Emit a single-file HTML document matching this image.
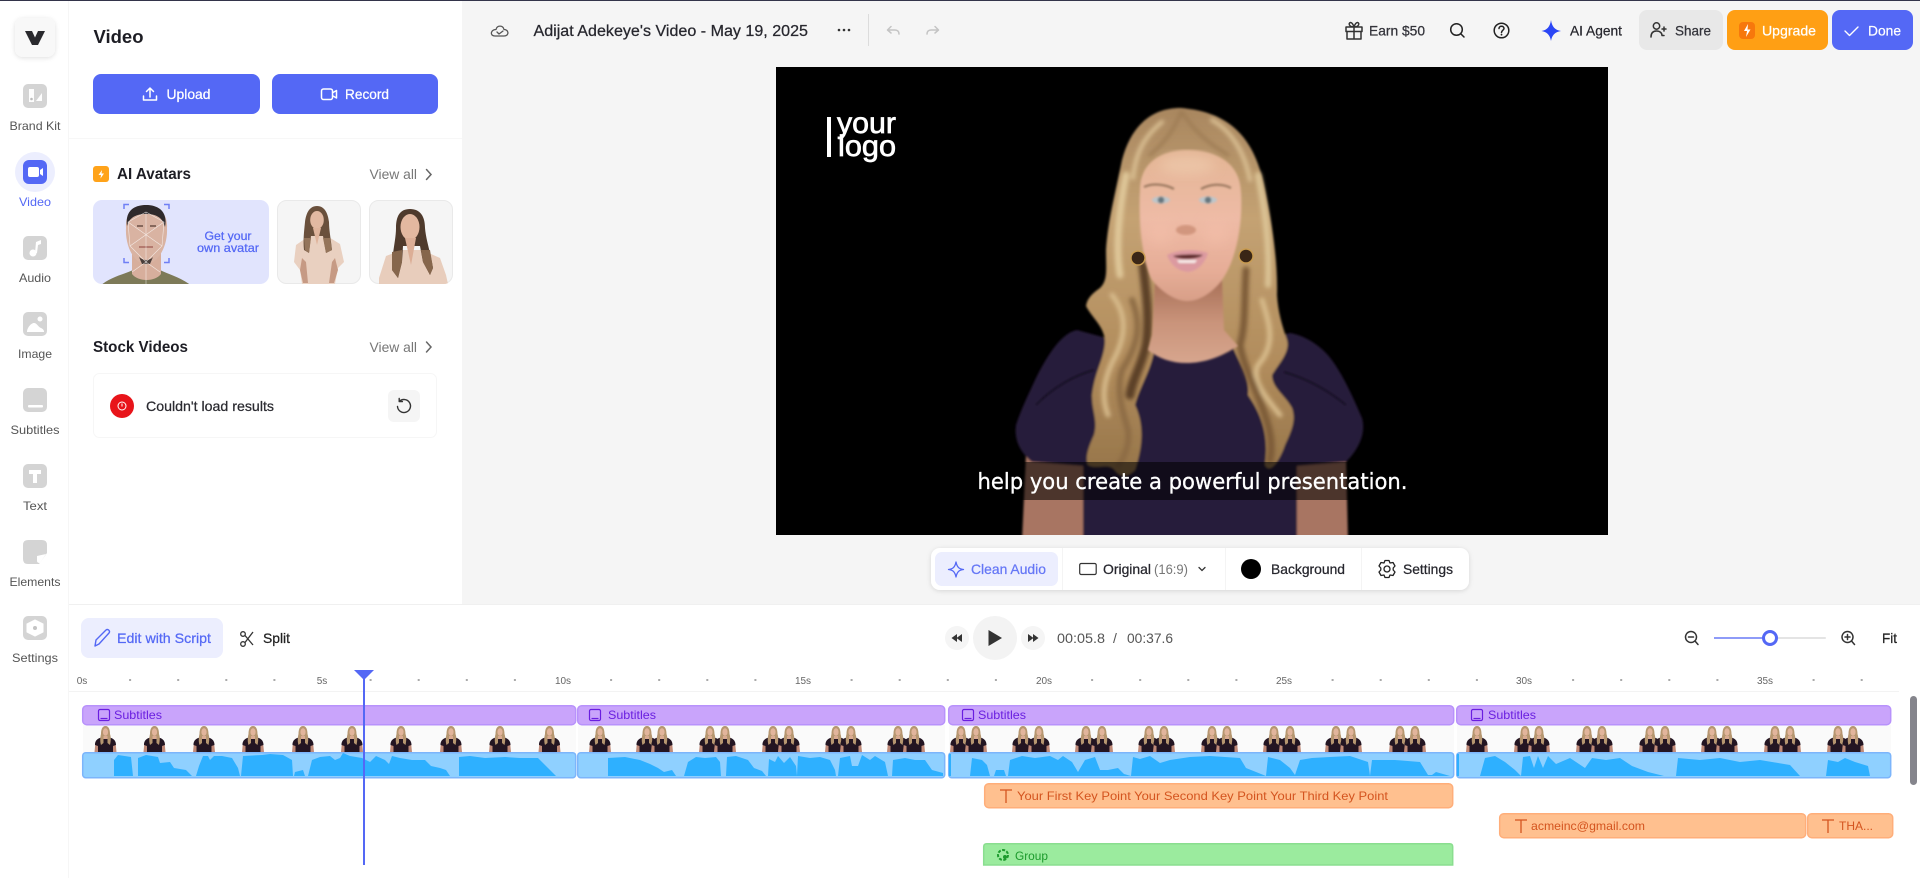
<!DOCTYPE html>
<html lang="en"><head><meta charset="utf-8"><title>Video editor</title>
<style>
html,body{margin:0;padding:0;background:#fff;width:1920px;height:878px;overflow:hidden}
svg{display:block;position:absolute;left:0;top:0}
text{font-family:"Liberation Sans",sans-serif;white-space:pre}
.m{fill:currentColor;stroke:currentColor;stroke-width:.25}
.s{fill:none;stroke:currentColor;stroke-width:1.5;stroke-linecap:round;stroke-linejoin:round}
.r{font-size:12px;fill:#555;text-anchor:middle}
.k{font-size:10px;fill:#666;text-anchor:middle}
.sub{font-size:12px;fill:#6a1ee0}
.o{font-size:12px;fill:#d4541f}
</style></head><body>
<svg width="1920" height="878" viewBox="0 0 1920 878" xmlns="http://www.w3.org/2000/svg">
<defs>
<filter id="sh" x="-20%" y="-30%" width="140%" height="170%"><feDropShadow dx="0" dy="1" stdDeviation="2.5" flood-color="#000" flood-opacity=".13"/></filter>
<filter id="b1" x="-10%" y="-10%" width="120%" height="120%"><feGaussianBlur stdDeviation="1"/></filter>
<filter id="b2" x="-20%" y="-20%" width="140%" height="140%"><feGaussianBlur stdDeviation="2"/></filter>
<filter id="b4" x="-30%" y="-30%" width="160%" height="160%"><feGaussianBlur stdDeviation="6"/></filter>
<linearGradient id="face" x1="0" y1="0" x2="0" y2="1"><stop offset="0" stop-color="#e3b594"/><stop offset=".45" stop-color="#eebba6"/><stop offset=".8" stop-color="#e6ad97"/><stop offset="1" stop-color="#d89f88"/></linearGradient>
<linearGradient id="neck" x1="0" y1="0" x2="0" y2="1"><stop offset="0" stop-color="#a87058"/><stop offset=".5" stop-color="#c9937a"/><stop offset="1" stop-color="#d7a68e"/></linearGradient>
<linearGradient id="hair" x1="0" y1="0" x2="0" y2="1"><stop offset="0" stop-color="#a98760"/><stop offset=".3" stop-color="#c4a273"/><stop offset=".7" stop-color="#b18c5c"/><stop offset="1" stop-color="#96754a"/></linearGradient>
<clipPath id="vid"><rect x="776" y="67" width="832" height="468"/></clipPath>
<clipPath id="c1"><rect x="93" y="200" width="176" height="84" rx="9"/></clipPath>
<clipPath id="c2"><rect x="277" y="200" width="84" height="84" rx="9"/></clipPath>
<clipPath id="c3"><rect x="369" y="200" width="84" height="84" rx="9"/></clipPath>
<g id="w">
<path d="M-11 27L-10 17L10 17L11 27Z" fill="#c08a78"/>
<path d="M-10.500 20C-10.500 14-6 13-3 12L3 12C6 13 10.500 14 10.500 20L7.500 21L7.500 27L-7.500 27L-7.500 21Z" fill="#231522"/>
<path d="M0 1C-3.500 1-4.500 5-4.500 9C-5.500 13-5.500 17-4.500 20L-2 18L-2 12L2 12L2 18L4.500 20C5.500 15 5.500 12 4.500 9C4.500 5 3.500 1 0 1Z" fill="#b69670"/>
<ellipse cx="0" cy="7" rx="2.600" ry="3.700" fill="#e2b59c"/>
<path d="M-2 11H2V14H-2Z" fill="#d9aa92"/>
</g>
</defs>

<!-- frame -->
<rect x="0" y="0" width="1920" height="878" fill="#fff"/>
<rect x="462" y="1" width="1458" height="603" fill="#f5f5f5"/>
<rect x="0" y="0" width="1920" height="1" fill="#33344a"/>
<rect x="68" y="1" width="1" height="877" fill="#f6f6f6"/>
<rect x="69" y="604" width="1851" height="1" fill="#f0f0f0"/>
<rect x="69" y="138" width="393" height="1" fill="#f7f7f7"/>

<!-- rail -->
<rect x="15" y="18" width="40" height="39" rx="8" fill="#f8f8f8" filter="url(#sh)"/>
<path d="M25 31L32 31L35 37.500L38 31L45 31L38 45L32 45Z" fill="#2a2a2e"/>

<rect x="23" y="84" width="24" height="24" rx="5" fill="#d4d4d4"/>
<path d="M29 89H34V102H29Z M36 101L42 93V101Z" fill="#fff" opacity=".95"/>
<circle cx="31.500" cy="99" r="1.300" fill="#bbb"/>
<text class="r" x="35" y="130" textLength="51" lengthAdjust="spacingAndGlyphs">Brand Kit</text>

<circle cx="35" cy="172" r="20" fill="#eceefe"/>
<rect x="23" y="160" width="24" height="24" rx="6" fill="#5468f5"/>
<rect x="28" y="167" width="11" height="10" rx="2" fill="#fff"/><path d="M40 170L43 168V176L40 174Z" fill="#fff"/>
<text class="r" x="35" y="206" textLength="32" lengthAdjust="spacingAndGlyphs" style="fill:#5468f5">Video</text>

<rect x="23" y="236" width="24" height="24" rx="5" fill="#d4d4d4"/>
<circle cx="33" cy="253" r="3.500" fill="#fff"/><path d="M35 253L36 242L41 240V244L38 245L37 253Z" fill="#fff"/>
<text class="r" x="35" y="282" textLength="32" lengthAdjust="spacingAndGlyphs">Audio</text>

<rect x="23" y="312" width="24" height="24" rx="5" fill="#d4d4d4"/>
<circle cx="40" cy="319" r="2.500" fill="#fff"/><path d="M27 332C27 328 31 323 34 323C37 323 38 327 41 328C43 329 44 330 44 332Z" fill="#fff"/>
<text class="r" x="35" y="358" textLength="34" lengthAdjust="spacingAndGlyphs">Image</text>

<rect x="23" y="388" width="24" height="24" rx="5" fill="#d4d4d4"/>
<rect x="28" y="405" width="15" height="2.500" rx="1" fill="#fff"/>
<text class="r" x="35" y="434" textLength="49" lengthAdjust="spacingAndGlyphs">Subtitles</text>

<rect x="23" y="464" width="24" height="24" rx="5" fill="#d4d4d4"/>
<path d="M29 470H41V474H37V483H33V474H29Z" fill="#fff"/>
<text class="r" x="35" y="510" textLength="24" lengthAdjust="spacingAndGlyphs">Text</text>

<path d="M28 540H42Q47 540 47 545V553L39 564H28Q23 564 23 559V545Q23 540 28 540Z" fill="#d4d4d4"/>
<path d="M37 556L46 554L40 563Q37 563 37 561Z" fill="#fff"/>
<text class="r" x="35" y="586" textLength="51" lengthAdjust="spacingAndGlyphs">Elements</text>

<rect x="23" y="616" width="24" height="24" rx="5" fill="#d4d4d4"/>
<path d="M35 620L43 624V632L35 636L27 632V624Z" fill="#fff" stroke="#fff" stroke-width="1" stroke-linejoin="round"/><circle cx="35" cy="628" r="2" fill="#c4c4c4"/>
<text class="r" x="35" y="662" textLength="46" lengthAdjust="spacingAndGlyphs">Settings</text>

<!-- left panel -->
<text x="93.500" y="43" font-size="18" font-weight="700" fill="#1d1d24" textLength="50" lengthAdjust="spacingAndGlyphs">Video</text>
<rect x="93" y="74" width="167" height="40" rx="8" fill="#5468f5"/>
<rect x="272" y="74" width="166" height="40" rx="8" fill="#5468f5"/>
<g style="color:#fff" class="s"><path d="M150 97V89M146.500 91.500L150 88L153.500 91.500M143.500 96V100H156.500V96"/></g>
<text x="166.500" y="99" font-size="14" class="m" style="color:#fff" textLength="44" lengthAdjust="spacingAndGlyphs">Upload</text>
<g style="color:#fff" class="s"><rect x="321.500" y="89" width="11" height="10.500" rx="2"/><path d="M333 92.500L336.500 90.500V98L333 96"/></g>
<text x="345" y="99" font-size="14" class="m" style="color:#fff" textLength="44" lengthAdjust="spacingAndGlyphs">Record</text>

<rect x="93" y="166" width="16" height="16" rx="3" fill="#ffa31a"/>
<path d="M102 170L98.500 175H101L100.500 178.500L104 173.500H101.500Z" fill="#fff"/>
<text x="117" y="179" font-size="16" font-weight="700" fill="#1d1d24" textLength="74" lengthAdjust="spacingAndGlyphs">AI Avatars</text>
<text x="369.500" y="179" font-size="14" fill="#777" textLength="47.500" lengthAdjust="spacingAndGlyphs">View all</text>
<path d="M426.500 169.500L431 174.500L426.500 179.500" fill="none" stroke="#666" stroke-width="1.500" stroke-linecap="round"/>

<!-- own avatar card -->
<rect x="93" y="200" width="176" height="84" rx="9" fill="#e1e4fd"/>
<g clip-path="url(#c1)">
<path d="M100 286C110 277 125 274 133 270L160 270C168 274 180 277 192 286Z" fill="#7d7a58"/>
<path d="M132 252H161V274C155 282 138 282 132 274Z" fill="#d7ae9c"/>
<path d="M126 228C125 214 133 205 146 205C159 205 168 214 167 228C168 246 158 264 146 264C134 264 125 246 126 228Z" fill="#d9b3a2"/>
<path d="M127 226C125 212 133 205 146 205C159 205 168 212 165 227C163 219 158 214 146 214C134 214 129 219 127 226Z" fill="#2f2a2c"/>
<path d="M137 226H143M150 226H156" stroke="#6b4f45" stroke-width="1.500"/>
<path d="M139 247H153" stroke="#a8685e" stroke-width="1.500"/>
<path d="M139 257C144 261 149 261 153 257L150 264H142Z" fill="#4a3d3a"/>
<path d="M128 222L146 212L164 222L162 246L146 262L130 246ZM146 212V262M128 222L162 246M164 222L130 246M132 272L146 262L160 272M146 262V284" fill="none" stroke="#fff" stroke-width=".6" opacity=".7"/>
<path d="M124 209V204.500H129M164 204.500H169V209M124 258V262.500H129M164 262.500H169V258" fill="none" stroke="#6f7ff5" stroke-width="1.500"/>
</g>
<text x="204.500" y="240" font-size="12" class="m" style="color:#5468f5" textLength="47" lengthAdjust="spacingAndGlyphs">Get your</text>
<text x="197" y="252" font-size="12" class="m" style="color:#5468f5" textLength="62" lengthAdjust="spacingAndGlyphs">own avatar</text>

<!-- woman cards -->
<rect x="277.500" y="200.500" width="83" height="83" rx="9" fill="#f5f5f5" stroke="#e9e9e9"/>
<g clip-path="url(#c2)">
<path d="M309 236L296 245L294 262L300 270L302 284H335L338 268L344 262L340 244L327 236Z" fill="#e9d0c0"/>
<path d="M302 258L300 270L303 283H308L306 262ZM335 258L338 270L334 283H329L332 262Z" fill="#c69a84"/>
<path d="M317 206C309 206 306 214 305 222C304 232 303 240 304 250L309 253L311 236H323L326 253L332 250C331 240 329 230 329 222C328 214 325 206 317 206Z" fill="#6a503c"/>
<path d="M304 238L305 250L309 253L311 238ZM323 238L326 253L332 250L330 238Z" fill="#94745a"/>
<ellipse cx="317" cy="220" rx="6.800" ry="9" fill="#e2b9a2"/>
<path d="M313 228H321L317 245Z" fill="#dfb49c"/>
</g>
<rect x="369.500" y="200.500" width="83" height="83" rx="9" fill="#f5f5f5" stroke="#e9e9e9"/>
<g clip-path="url(#c3)">
<path d="M402 250L386 256L379 278V284H448L446 275L440 258L422 250Z" fill="#e8cdbc"/>
<path d="M410 209C400 209 396 216 396 228C396 240 392 252 392 270L398 278L402 262L403 246H420L423 262L430 275L433 268C430 250 426 240 425 228C425 216 420 209 410 209Z" fill="#4f3a2c"/>
<path d="M392 252V270L398 278L402 262L402 250ZM421 250L423 262L430 275L433 268L430 250Z" fill="#86664c"/>
<ellipse cx="410" cy="227" rx="9.500" ry="13" fill="#e3b8a0"/>
<path d="M405 238H416L411 265Z" fill="#dcae96"/>
</g>

<!-- stock videos -->
<text x="93" y="352" font-size="16" font-weight="700" fill="#1d1d24" textLength="95" lengthAdjust="spacingAndGlyphs">Stock Videos</text>
<text x="369.500" y="352" font-size="14" fill="#777" textLength="47.500" lengthAdjust="spacingAndGlyphs">View all</text>
<path d="M426.500 342L431 347L426.500 352" fill="none" stroke="#666" stroke-width="1.500" stroke-linecap="round"/>
<rect x="93.500" y="373.500" width="343" height="64" rx="6" fill="#fff" stroke="#f6f6f6"/>
<circle cx="122" cy="406" r="12" fill="#e8141a"/>
<circle cx="122" cy="406" r="4" fill="none" stroke="#fff" stroke-width="1"/><path d="M122 403.500V406.500" stroke="#fff" stroke-width="1"/>
<text x="146" y="411" font-size="14" class="m" style="color:#2a2a30" textLength="128" lengthAdjust="spacingAndGlyphs">Couldn't load results</text>
<rect x="388" y="390" width="32" height="32" rx="6" fill="#f5f5f5"/>
<path d="M399.400 401.400A6.500 6.500 0 1 1 397.500 406.500M399.200 398.500V401.600H402.400" fill="none" stroke="#333" stroke-width="1.400" stroke-linecap="round" stroke-linejoin="round"/>

<!-- topbar -->
<g style="color:#555" class="s"><path d="M495 36H504C509.500 36 509 29.500 504 29.500C503 25 497 25 496 29.500C490.500 29.500 489.500 36 495 36Z M497 32L499 34L503 31" stroke-width="1.300"/></g>
<text x="533.500" y="36" font-size="15.500" class="m" style="color:#27272e" textLength="274.500" lengthAdjust="spacingAndGlyphs">Adijat Adekeye's Video - May 19, 2025</text>
<circle cx="839" cy="30" r="1.300" fill="#333"/><circle cx="844" cy="30" r="1.300" fill="#333"/><circle cx="849" cy="30" r="1.300" fill="#333"/>
<rect x="868" y="14" width="1" height="32" fill="#dcdcdc"/>
<path d="M891 26.500L887.500 30L891 33M888 30H895C897.500 30 899 31.500 899 34" fill="none" stroke="#c4c4c4" stroke-width="1.500" stroke-linecap="round" stroke-linejoin="round"/>
<path d="M935 26.500L938.500 30L935 33M938 30H931C928.500 30 927 31.500 927 34" fill="none" stroke="#c4c4c4" stroke-width="1.500" stroke-linecap="round" stroke-linejoin="round"/>

<g style="color:#333" class="s"><rect x="1346" y="27" width="16" height="4.500"/><path d="M1347 31.500V39H1361V31.500M1354 27V39M1354 27C1349 27 1348 23 1350.500 22.500C1352.500 22.500 1354 27 1354 27C1354 27 1355.500 22.500 1357.500 22.500C1360 23 1359 27 1354 27"/></g>
<text x="1369" y="35.500" font-size="14" class="m" style="color:#33333a" textLength="56" lengthAdjust="spacingAndGlyphs">Earn $50</text>
<g style="color:#222" class="s"><circle cx="1456.500" cy="29.500" r="5.800"/><path d="M1461 34L1464 37"/></g>
<g style="color:#222" class="s"><circle cx="1501.500" cy="30.500" r="7.300"/><path d="M1499 28.500C1499 25.500 1504 25.500 1504 28.500C1504 30 1501.500 30.500 1501.500 32.500"/></g>
<circle cx="1501.500" cy="34.700" r=".9" fill="#222"/>
<path d="M1551 20C1552 27 1555 30 1561 31C1555 32 1552 35 1551 41C1550 35 1547 32 1541.500 31C1547 30 1550 27 1551 20Z" fill="#2b46f5"/>
<text x="1570" y="35.500" font-size="14" class="m" style="color:#27272e" textLength="52" lengthAdjust="spacingAndGlyphs">AI Agent</text>
<rect x="1639" y="10" width="84" height="40" rx="8" fill="#e8e8e8"/>
<g style="color:#333" class="s"><circle cx="1656.500" cy="26" r="3.200"/><path d="M1651 37C1651 33 1653 31 1656.500 31C1660 31 1662 33 1662 35.500H1664M1664 27V31M1662 29H1666"/></g>
<text x="1675" y="35.500" font-size="14" class="m" style="color:#33333a" textLength="36" lengthAdjust="spacingAndGlyphs">Share</text>
<rect x="1727" y="10" width="101" height="40" rx="8" fill="#ff9f14"/>
<rect x="1739" y="22" width="16" height="17" rx="4" fill="#f7780c"/>
<path d="M1748 24L1744 31H1747L1746 37L1750.500 29.500H1747.500Z" fill="#fff"/>
<text x="1762" y="35.500" font-size="14" class="m" style="color:#fff" textLength="54" lengthAdjust="spacingAndGlyphs">Upgrade</text>
<rect x="1832" y="10" width="81" height="40" rx="8" fill="#5468f5"/>
<path d="M1845 31L1849.500 35.500L1858 27" fill="none" stroke="#fff" stroke-width="1.400" stroke-linecap="round" stroke-linejoin="round"/>
<text x="1868" y="35.500" font-size="14" class="m" style="color:#fff" textLength="33" lengthAdjust="spacingAndGlyphs">Done</text>

<!-- video -->
<rect x="776" y="67" width="832" height="468" fill="#000"/>
<g clip-path="url(#vid)">
<rect x="827" y="117" width="4" height="40" fill="#fff"/>
<text x="837" y="133" font-size="30" fill="#fff" stroke="#fff" stroke-width=".7" textLength="59" lengthAdjust="spacingAndGlyphs">your</text>
<text x="838" y="156" font-size="30" fill="#fff" stroke="#fff" stroke-width=".7" textLength="58" lengthAdjust="spacingAndGlyphs">logo</text>

<g filter="url(#b1)">
<path d="M1026 455L1022 540H1086V455Z" fill="#a87462"/>
<path d="M1297 455V540H1348L1346 455Z" fill="#a87462"/>
<path d="M1077 330C1060 333 1045 360 1036 378C1028 395 1020 412 1016 425C1014 440 1020 452 1032 462L1083 466L1083 540L1297 540L1297 466L1346 462C1360 448 1366 432 1362 418C1350 390 1338 365 1325 352C1315 342 1302 335 1290 333L1237 345C1215 362 1170 365 1150 350Z" fill="#281a3b"/>
<path d="M1036 405C1052 388 1075 375 1094 370M1346 405C1325 388 1305 378 1284 372" stroke="#170d24" stroke-width="2" fill="none"/>
<path d="M1180 108C1155 108 1132 122 1122 160C1115 195 1108 220 1106 250C1106 270 1108 280 1100 288C1093 293 1087 298 1086 306C1092 318 1103 325 1105 340C1105 358 1095 370 1092 395C1092 412 1098 420 1094 435C1088 448 1085 458 1088 465C1097 470 1108 462 1115 470C1122 480 1130 475 1135 470C1145 440 1142 420 1135 405C1140 385 1152 370 1155 345L1232 345C1240 365 1250 375 1248 395C1258 410 1270 430 1265 465C1270 475 1280 460 1285 445C1292 430 1296 420 1292 408C1285 395 1272 388 1272 375C1280 362 1290 352 1287 340C1282 325 1278 312 1277 295C1278 262 1272 225 1266 195C1258 150 1240 112 1180 108Z" fill="url(#hair)"/>
</g>
<g fill="none" filter="url(#b2)" stroke-linecap="round">
<path d="M1126 175C1120 205 1115 245 1120 275" stroke="#dfc799" stroke-width="7"/>
<path d="M1112 295C1124 310 1128 330 1116 355C1105 375 1100 395 1108 415" stroke="#d8bc8c" stroke-width="5"/>
<path d="M1132 300C1142 325 1138 345 1122 370C1116 390 1122 410 1128 430C1130 445 1124 458 1118 466" stroke="#8d6c45" stroke-width="6"/>
<path d="M1143 265C1146 290 1150 320 1146 345C1142 365 1132 380 1130 395" stroke="#5c4026" stroke-width="9"/>
<path d="M1258 175C1264 205 1270 240 1268 285" stroke="#dcc496" stroke-width="6"/>
<path d="M1262 300C1270 325 1276 345 1258 365C1250 380 1268 400 1280 415" stroke="#d9bd8d" stroke-width="5"/>
<path d="M1246 270C1244 300 1246 325 1240 345C1244 370 1260 395 1268 425C1272 440 1272 450 1270 460" stroke="#7d5c38" stroke-width="7"/>
<path d="M1162 122C1146 135 1136 150 1133 178M1212 120C1230 130 1244 150 1250 180" stroke="#dbc194" stroke-width="4"/>
<path d="M1181 112C1176 125 1168 140 1150 155M1182 112C1190 125 1205 142 1228 155" stroke="#9c7a52" stroke-width="3"/>
</g>
<g filter="url(#b1)">
<path d="M1155 280L1152 335L1148 350C1170 368 1205 368 1238 346L1224 330L1222 280Z" fill="url(#neck)"/>
<path d="M1140 190C1140 160 1165 150 1187 150C1212 150 1240 160 1241 192C1243 225 1236 260 1222 280C1210 295 1198 301 1187 301C1176 301 1163 293 1152 280C1143 262 1138 225 1140 190Z" fill="url(#face)"/>
</g>
<ellipse cx="1160" cy="232" rx="14" ry="13" fill="#f2bda8" opacity=".7" filter="url(#b4)"/>
<ellipse cx="1216" cy="232" rx="14" ry="13" fill="#f2bda8" opacity=".7" filter="url(#b4)"/>
<ellipse cx="1187" cy="165" rx="28" ry="10" fill="#f0cdb0" opacity=".6" filter="url(#b4)"/>
<ellipse cx="1186" cy="230" rx="10" ry="5" fill="#c98b72" opacity=".75" filter="url(#b1)"/>
<g filter="url(#b1)">
<path d="M1144 187C1152 183 1165 184 1174 189" stroke="#94735a" stroke-width="2" fill="none"/>
<path d="M1201 189C1210 184 1222 183 1231 188" stroke="#94735a" stroke-width="2" fill="none"/>
<ellipse cx="1161" cy="200" rx="9" ry="3.500" fill="#bcc6cb"/><ellipse cx="1208" cy="200" rx="9" ry="3.500" fill="#bcc6cb"/>
<circle cx="1161" cy="200" r="3.300" fill="#66767e"/><circle cx="1208" cy="200" r="3.300" fill="#66767e"/>
<path d="M1167 255C1178 249 1197 249 1208 253C1205 263 1198 271 1188 272C1176 271 1170 263 1167 255Z" fill="#dc9aa0"/>
<path d="M1173 256C1180 254 1198 254 1203 255C1198 260 1178 260 1173 256Z" fill="#5e2c2c"/>
<path d="M1177 260H1197L1195 263H1179Z" fill="#f6ebe8"/>
</g>
<circle cx="1138" cy="258" r="7" fill="#3a2616" stroke="#c99c50" stroke-width="1.400"/>
<circle cx="1246" cy="256" r="7" fill="#3a2616" stroke="#c99c50" stroke-width="1.400"/>
<rect x="966" y="462" width="452" height="38" fill="#000" opacity=".55"/>
<text x="977.500" y="489" font-size="22" fill="#fff" stroke="#fff" stroke-width=".3" style="font-family:'DejaVu Sans',sans-serif" textLength="430" lengthAdjust="spacingAndGlyphs">help you create a powerful presentation.</text>
</g>

<!-- canvas toolbar -->
<rect x="931" y="548" width="538" height="42" rx="9" fill="#fff" filter="url(#sh)"/>
<rect x="935" y="552" width="123" height="34" rx="7" fill="#eceefe"/>
<path d="M956 562C957 567 959 569 963.500 569.500C959 570 957 572 956 577C955 572 953 570 948.500 569.500C953 569 955 567 956 562Z" fill="none" stroke="#5468f5" stroke-width="1.300" stroke-linejoin="round"/>
<text x="971" y="574" font-size="14" class="m" style="color:#6577f6" textLength="75" lengthAdjust="spacingAndGlyphs">Clean Audio</text>
<rect x="1062" y="548" width="1" height="42" fill="#f4f4f4"/>
<rect x="1079.700" y="563.500" width="16.500" height="11" rx="1.500" fill="none" stroke="#333" stroke-width="1.200"/>
<text x="1103" y="574" font-size="14" class="m" style="color:#27272e" textLength="48" lengthAdjust="spacingAndGlyphs">Original</text>
<text x="1154" y="574" font-size="14" fill="#777" textLength="34" lengthAdjust="spacingAndGlyphs">(16:9)</text>
<path d="M1199 567.500L1202 570.500L1205 567.500" fill="none" stroke="#333" stroke-width="1.300" stroke-linecap="round"/>
<rect x="1225" y="548" width="1" height="42" fill="#f4f4f4"/>
<circle cx="1251" cy="569" r="10" fill="#000"/>
<text x="1271" y="574" font-size="14" class="m" style="color:#27272e" textLength="74" lengthAdjust="spacingAndGlyphs">Background</text>
<rect x="1361" y="548" width="1" height="42" fill="#f4f4f4"/>
<path d="M1385 560.500H1389L1390 563L1393 562.500L1395 566L1393.200 568V570L1395 572L1393 575.500L1390 575L1389 577.500H1385L1384 575L1381 575.500L1379 572L1380.800 570V568L1379 566L1381 562.500L1384 563Z" fill="none" stroke="#222" stroke-width="1.300" stroke-linejoin="round"/>
<circle cx="1387" cy="569" r="3" fill="none" stroke="#222" stroke-width="1.300"/>
<text x="1403" y="574" font-size="14" class="m" style="color:#27272e" textLength="50" lengthAdjust="spacingAndGlyphs">Settings</text>

<!-- timeline head -->
<rect x="81" y="618" width="142" height="40" rx="8" fill="#eceefe"/>
<path d="M95 646L96 640L106 630C108 628.500 110.500 631 109 633L99 644Z" fill="none" stroke="#5468f5" stroke-width="1.400" stroke-linejoin="round"/>
<text x="117" y="643" font-size="14" class="m" style="color:#5468f5" textLength="94" lengthAdjust="spacingAndGlyphs">Edit with Script</text>
<circle cx="243" cy="634" r="2.300" fill="none" stroke="#333" stroke-width="1.300"/><circle cx="243" cy="644" r="2.300" fill="none" stroke="#333" stroke-width="1.300"/>
<path d="M245 635.500L253 645M245 642.500L253 632" stroke="#333" stroke-width="1.300"/>
<text x="263" y="643" font-size="14" class="m" style="color:#222" textLength="27" lengthAdjust="spacingAndGlyphs">Split</text>

<circle cx="957" cy="638" r="12" fill="#f5f5f5"/><circle cx="995" cy="638" r="22" fill="#f3f3f3"/><circle cx="1033" cy="638" r="12" fill="#f5f5f5"/>
<path d="M957 634V642L951.500 638Z M962 634V642L956.500 638Z" fill="#333"/>
<path d="M988.500 630V646L1002 638Z" fill="#333"/>
<path d="M1028 634V642L1033.500 638Z M1033 634V642L1038.500 638Z" fill="#333"/>
<text x="1057" y="643" font-size="14" fill="#555" textLength="48" lengthAdjust="spacingAndGlyphs">00:05.8</text>
<text x="1113" y="643" font-size="14" fill="#555">/</text>
<text x="1127" y="643" font-size="14" fill="#555" textLength="46" lengthAdjust="spacingAndGlyphs">00:37.6</text>

<g style="color:#333" class="s"><circle cx="1691" cy="637" r="5.500"/><path d="M1695 641L1698 644.500M1688.500 637H1693.500"/></g>
<rect x="1714" y="637" width="112" height="2" rx="1" fill="#e4e4e4"/><rect x="1714" y="637" width="56" height="2" fill="#8e9bf8"/>
<circle cx="1770" cy="638" r="6.500" fill="#fff" stroke="#5468f5" stroke-width="3"/>
<g style="color:#333" class="s"><circle cx="1847.500" cy="637" r="5.500"/><path d="M1851.500 641L1854.500 644.500M1845 637H1850M1847.500 634.500V639.500"/></g>
<text x="1882" y="643" font-size="14" class="m" style="color:#222" textLength="15" lengthAdjust="spacingAndGlyphs">Fit</text>

<!-- ruler -->
<line x1="81" y1="680" x2="1870" y2="680" stroke="#aaa" stroke-width="2" stroke-dasharray="2 46.1"/>
<rect x="72" y="672" width="20" height="16" fill="#fff"/><rect x="312" y="672" width="20" height="16" fill="#fff"/><rect x="552" y="672" width="22" height="16" fill="#fff"/><rect x="792" y="672" width="22" height="16" fill="#fff"/><rect x="1033" y="672" width="22" height="16" fill="#fff"/><rect x="1273" y="672" width="22" height="16" fill="#fff"/><rect x="1513" y="672" width="22" height="16" fill="#fff"/><rect x="1754" y="672" width="22" height="16" fill="#fff"/>
<text class="k" x="82" y="684">0s</text><text class="k" x="322" y="684">5s</text><text class="k" x="563" y="684">10s</text><text class="k" x="803" y="684">15s</text><text class="k" x="1044" y="684">20s</text><text class="k" x="1284" y="684">25s</text><text class="k" x="1524" y="684">30s</text><text class="k" x="1765" y="684">35s</text>
<rect x="69" y="691" width="1830" height="1" fill="#f3f3f3"/>

<!-- thumb strips -->
<rect x="83" y="725" width="493" height="27" fill="#fafafa"/>
<rect x="578" y="725" width="367" height="27" fill="#fafafa"/>
<rect x="949" y="725" width="505" height="27" fill="#fafafa"/>
<rect x="1457" y="725" width="434" height="27" fill="#fafafa"/>
<use href="#w" x="105.500" y="725"/><use href="#w" x="154.500" y="725"/><use href="#w" x="204" y="725"/><use href="#w" x="253" y="725"/><use href="#w" x="303" y="725"/><use href="#w" x="352" y="725"/><use href="#w" x="401" y="725"/><use href="#w" x="451" y="725"/><use href="#w" x="500" y="725"/><use href="#w" x="549.500" y="725"/>
<use href="#w" x="600" y="725"/><use href="#w" x="647" y="725"/><use href="#w" x="662" y="725"/><use href="#w" x="710" y="725"/><use href="#w" x="725" y="725"/><use href="#w" x="773" y="725"/><use href="#w" x="789" y="725"/><use href="#w" x="836" y="725"/><use href="#w" x="851" y="725"/><use href="#w" x="898" y="725"/><use href="#w" x="914" y="725"/>
<use href="#w" x="961" y="725"/><use href="#w" x="976" y="725"/><use href="#w" x="1023" y="725"/><use href="#w" x="1039" y="725"/><use href="#w" x="1086" y="725"/><use href="#w" x="1102" y="725"/><use href="#w" x="1149" y="725"/><use href="#w" x="1164" y="725"/><use href="#w" x="1212" y="725"/><use href="#w" x="1227" y="725"/><use href="#w" x="1274" y="725"/><use href="#w" x="1290" y="725"/><use href="#w" x="1336" y="725"/><use href="#w" x="1351" y="725"/><use href="#w" x="1400" y="725"/><use href="#w" x="1415" y="725"/>
<use href="#w" x="1477" y="725"/><use href="#w" x="1525" y="725"/><use href="#w" x="1539" y="725"/><use href="#w" x="1587" y="725"/><use href="#w" x="1602" y="725"/><use href="#w" x="1650" y="725"/><use href="#w" x="1665" y="725"/><use href="#w" x="1712" y="725"/><use href="#w" x="1727" y="725"/><use href="#w" x="1775" y="725"/><use href="#w" x="1790" y="725"/><use href="#w" x="1838" y="725"/><use href="#w" x="1853" y="725"/>

<!-- subtitle clips -->
<g fill="#c9a4fb" stroke="#b892fb" stroke-width="1.500">
<rect x="82.700" y="705.700" width="493" height="19" rx="4"/><rect x="577.700" y="705.700" width="367" height="19" rx="4"/><rect x="948.700" y="705.700" width="505" height="19" rx="4"/><rect x="1456.700" y="705.700" width="434" height="19" rx="4"/>
</g>
<g fill="none" stroke="#6a1ee0" stroke-width="1.200">
<rect x="98.500" y="709.500" width="11" height="11" rx="1.500"/><path d="M100.500 718.500H107.500"/>
<rect x="589.500" y="709.500" width="11" height="11" rx="1.500"/><path d="M591.500 718.500H598.500"/>
<rect x="962.500" y="709.500" width="11" height="11" rx="1.500"/><path d="M964.500 718.500H971.500"/>
<rect x="1471.500" y="709.500" width="11" height="11" rx="1.500"/><path d="M1473.500 718.500H1480.500"/>
</g>
<text class="sub" x="114" y="719" textLength="48" lengthAdjust="spacingAndGlyphs">Subtitles</text>
<text class="sub" x="608" y="719" textLength="48" lengthAdjust="spacingAndGlyphs">Subtitles</text>
<text class="sub" x="978" y="719" textLength="48" lengthAdjust="spacingAndGlyphs">Subtitles</text>
<text class="sub" x="1488" y="719" textLength="48" lengthAdjust="spacingAndGlyphs">Subtitles</text>

<!-- audio clips -->
<g fill="#8fd0ff" stroke="#7cb5fb" stroke-width="1.500">
<rect x="82.700" y="752.700" width="493" height="25" rx="3"/><rect x="577.700" y="752.700" width="367" height="25" rx="3"/><rect x="948.700" y="752.700" width="505" height="25" rx="3"/><rect x="1456.700" y="752.700" width="434" height="25" rx="3"/>
</g>
<g fill="#2eb0ff">
<polygon points="114,776 114,760 118,755 131,757 133,776 138,776 138,758 146,755 158,757 160,763 170,762 174,768 186,770 192,776 196,776 199,766 203,756 208,756 210,760 214,756 222,756 232,758 238,768 240,776 241,776 243,756 262,755 270,754 283,755 292,760 293,776 294,776 295,772 303,770 305,776 308,776 312,760 320,757 330,756 335,760 340,758 343,753 350,756 362,758 370,762 376,756 385,760 389,764 392,756 400,758 412,760 425,760 431,766 440,768 446,770 450,776 459,776 459,757 470,756 485,758 505,757 520,758 538,758 548,768 556,776"/>
<polygon points="608,776 608,758 625,757 640,760 650,764 658,768 664,772 672,770 676,776 684,776 688,762 696,757 705,758 716,757 720,762 721,776 726,776 727,757 736,756 748,760 754,768 762,771 766,776 768,776 769,759 775,762 778,756 784,763 790,757 796,766 797,776 798,756 810,758 820,757 830,760 835,770 836,776 838,776 840,758 850,756 852,766 858,766 862,755 870,760 875,756 885,762 888,776 892,776 893,760 905,758 915,760 925,760 932,770 943,773 943,776"/>
<polygon points="949,776 949,754 951,754 951,776 970,776 972,758 982,760 987,765 990,776 994,776 996,770 1004,770 1006,776 1008,776 1010,760 1022,756 1035,758 1050,756 1058,760 1063,756 1072,762 1078,772 1085,760 1095,757 1100,770 1108,770 1118,768 1124,774 1131,776 1133,757 1140,759 1150,756 1160,763 1170,760 1190,757 1210,756 1240,758 1246,768 1256,772 1266,776 1268,757 1280,760 1290,768 1295,775 1300,760 1312,758 1330,757 1350,756 1368,762 1370,776 1372,760 1395,760 1420,762 1428,775 1432,775 1436,772 1450,776"/>
<polygon points="1457,776 1457,754 1459,754 1459,776 1480,776 1485,758 1495,756 1505,762 1515,770 1521,776 1523,757 1530,756 1534,768 1538,756 1543,768 1548,756 1556,764 1570,758 1585,768 1592,758 1606,760 1620,758 1632,766 1648,772 1664,776 1676,776 1678,758 1700,760 1720,758 1740,762 1760,760 1790,765 1800,776 1826,776 1828,760 1838,762 1845,758 1855,762 1868,766 1870,776"/>
</g>

<!-- text clips -->
<rect x="984.700" y="783.700" width="468" height="24" rx="4" fill="#ffc08f" stroke="#ffae7a" stroke-width="1.500"/>
<path d="M1000 790H1012M1006 790V803" stroke="#d4541f" stroke-width="1.300" fill="none"/>
<text class="o" x="1017" y="800" textLength="371" lengthAdjust="spacingAndGlyphs">Your First Key Point Your Second Key Point Your Third Key Point</text>
<rect x="1499.700" y="813.700" width="306" height="24" rx="4" fill="#ffc08f" stroke="#ffae7a" stroke-width="1.500"/>
<path d="M1515 820H1527M1521 820V833" stroke="#d4541f" stroke-width="1.300" fill="none"/>
<text class="o" x="1531" y="830" textLength="114" lengthAdjust="spacingAndGlyphs">acmeinc@gmail.com</text>
<rect x="1807.700" y="813.700" width="85" height="24" rx="4" fill="#ffc08f" stroke="#ffae7a" stroke-width="1.500"/>
<path d="M1822 820H1834M1828 820V833" stroke="#d4541f" stroke-width="1.300" fill="none"/>
<text class="o" x="1839" y="830" textLength="34" lengthAdjust="spacingAndGlyphs">THA...</text>

<!-- group clip -->
<path d="M983.700 865V846.700Q983.700 843.700 986.700 843.700H1449.700Q1452.700 843.700 1452.700 846.700V865Z" fill="#9beb9e" stroke="#8ade8f" stroke-width="1.500"/>
<circle cx="1003" cy="855" r="5" fill="none" stroke="#1c9a2c" stroke-width="2" stroke-dasharray="3 1.500"/>
<circle cx="1005" cy="857" r="2" fill="#1c9a2c"/>
<text x="1015" y="860" font-size="12" fill="#1c9a2c" textLength="33" lengthAdjust="spacingAndGlyphs">Group</text>

<!-- playhead -->
<rect x="363" y="676" width="2" height="189" fill="#5468f5"/>
<path d="M354 670H374L364 680Z" fill="#5468f5"/>

<!-- scrollbar -->
<rect x="1910" y="696" width="7" height="89" rx="3.500" fill="#85858c"/>
</svg>
</body></html>
